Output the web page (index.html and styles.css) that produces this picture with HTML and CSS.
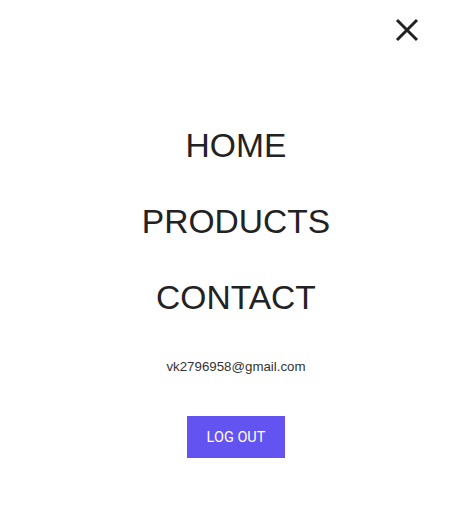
FILE: index.html
```html
<!DOCTYPE html>
<html>
<head>
<meta charset="utf-8">
<link rel="stylesheet" href="styles.css">
</head>
<body>
<div class="menu">
  <button class="close" aria-label="Close">
    <svg width="24" height="24" viewBox="0 0 24 24"><path d="M2 2L22 22M22 2L2 22" stroke="#222" stroke-width="3" stroke-linecap="butt"/></svg>
  </button>
  <nav class="links">
    <a href="#">HOME</a>
    <a href="#">PRODUCTS</a>
    <a href="#">CONTACT</a>
  </nav>
  <div class="email">vk2796958@gmail.com</div>
  <button class="logout">LOG OUT</button>
</div>
</body>
</html>
```
FILE: styles.css
```css
html, body { margin: 0; padding: 0; background: #fff; }
body { font-family: "Liberation Sans", Arial, sans-serif; color: #222; }
.menu { position: relative; width: 459px; height: 528px; display: flex; flex-direction: column; align-items: center; padding-left: 13px; box-sizing: border-box; }
.close { position: absolute; top: 18px; right: 40px; background: none; border: 0; padding: 0; cursor: pointer; line-height: 0; }
.links { display: flex; flex-direction: column; align-items: center; gap: 38px; margin-top: 127px; }
.links a { font-size: 33.6px; line-height: 38px; color: #222; text-decoration: none; }
.email { margin-top: 42px; font-size: 13.3px; line-height: 15px; color: #333; }
.logout { margin-top: 42px; width: 98px; height: 42px; border: 0; background: #6353f1; color: #fff; font-family: Roboto, "Liberation Sans", sans-serif; font-size: 14.5px; cursor: pointer; padding: 0; }
```
